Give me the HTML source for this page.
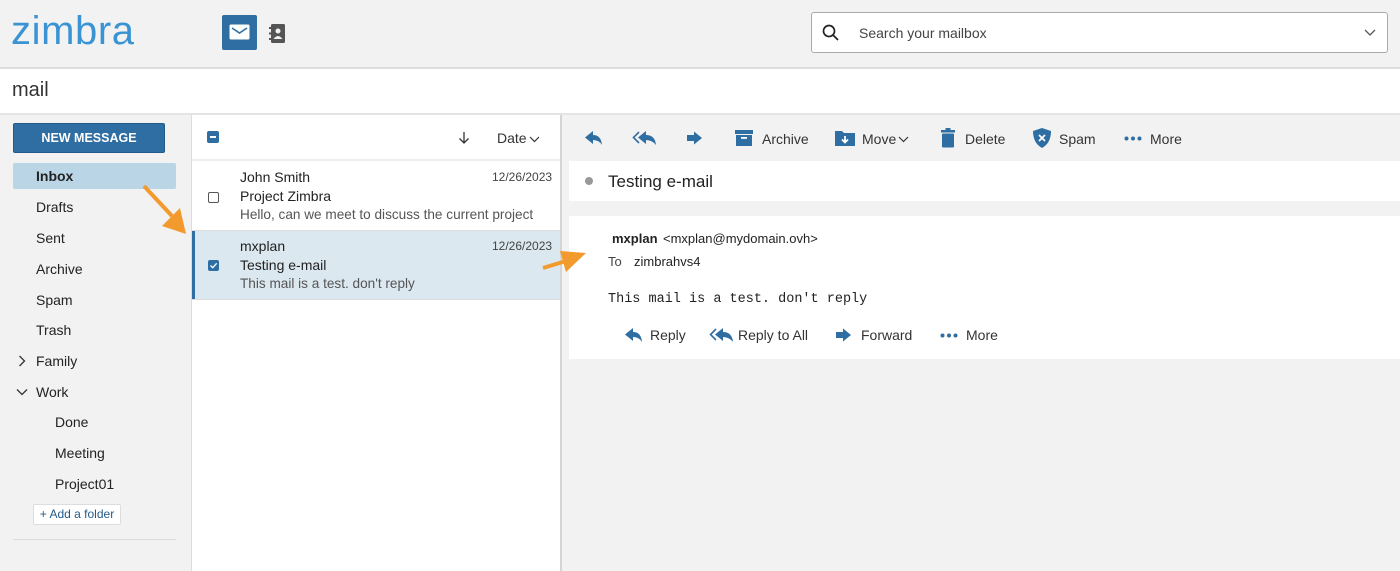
<!DOCTYPE html>
<html><head><meta charset="utf-8"><style>
*{margin:0;padding:0;box-sizing:border-box}
body{width:1400px;height:571px;overflow:hidden;position:relative;background:#f2f2f2;font-family:"Liberation Sans",sans-serif;color:#222}
.a{position:absolute}
.t{position:absolute;white-space:nowrap}
.blue{color:#2f6ea2}
</style></head><body>
<!-- header -->
<div class="a" style="left:0;top:0;width:1400px;height:67px;background:#f2f2f2"></div>
<div class="t" style="left:11px;top:9px;font-size:40px;color:#3a93d3;letter-spacing:0.6px;font-weight:normal">zimbra</div>
<div class="a" style="left:222px;top:15px;width:35px;height:35px;background:#2f6ea2;border-radius:2px"></div>
<svg class="a" style="left:229px;top:24px" width="21" height="16" viewBox="0 0 21 16"><rect x="0.5" y="0.5" width="20" height="15" rx="1.5" fill="#fff"/><path d="M3 4 L10.5 9 L18 4" stroke="#2f6ea2" stroke-width="1.6" fill="none"/></svg>
<svg class="a" style="left:269px;top:24px" width="17" height="19" viewBox="0 0 17 19"><rect x="2" y="0" width="14" height="19" rx="1.5" fill="#555"/><rect x="0" y="3" width="3" height="2" fill="#555"/><rect x="0" y="8.5" width="3" height="2" fill="#555"/><rect x="0" y="14" width="3" height="2" fill="#555"/><circle cx="9" cy="7" r="2.5" fill="#f2f2f2"/><path d="M4.5 15 Q9 9 13.5 15Z" fill="#f2f2f2"/></svg>
<div class="a" style="left:811px;top:12px;width:577px;height:41px;background:#fff;border:1px solid #aaa;border-radius:3px"></div>
<svg class="a" style="left:822px;top:24px" width="18" height="18" viewBox="0 0 18 18"><circle cx="7" cy="7" r="5.5" stroke="#222" stroke-width="1.7" fill="none"/><path d="M11 11 L16 16" stroke="#222" stroke-width="1.8"/></svg>
<div class="t" style="left:859px;top:25px;font-size:14px;color:#444">Search your mailbox</div>
<svg class="a" style="left:1364px;top:29px" width="12" height="8" viewBox="0 0 12 8"><path d="M1 1 L6 6 L11 1" stroke="#555" stroke-width="1.3" fill="none"/></svg>
<div class="a" style="left:0;top:67px;width:1400px;height:2px;background:#dcdcdc"></div>
<!-- mail bar -->
<div class="a" style="left:0;top:69px;width:1400px;height:44px;background:#fff"></div>
<div class="t" style="left:12px;top:79px;font-size:20px;color:#333">mail</div>
<div class="a" style="left:0;top:113px;width:1400px;height:2px;background:#e4e4e4"></div>
<!-- sidebar -->
<div class="a" style="left:191px;top:115px;width:1px;height:456px;background:#ddd"></div>
<div class="a" style="left:13px;top:123px;width:152px;height:30px;background:#2f6ea2;border:1px solid #245a88;border-radius:2px"></div>
<div class="t" style="left:13px;top:131px;width:152px;text-align:center;font-size:12.5px;font-weight:bold;color:#fff">NEW MESSAGE</div>
<div class="a" style="left:13px;top:163px;width:163px;height:26px;background:#bad6e6;border-radius:2px"></div>
<div class="t" style="left:36px;top:168px;font-size:14px;font-weight:bold">Inbox</div>
<div class="t" style="left:36px;top:199px;font-size:14px">Drafts</div>
<div class="t" style="left:36px;top:230px;font-size:14px">Sent</div>
<div class="t" style="left:36px;top:261px;font-size:14px">Archive</div>
<div class="t" style="left:36px;top:292px;font-size:14px">Spam</div>
<div class="t" style="left:36px;top:322px;font-size:14px">Trash</div>
<svg class="a" style="left:18px;top:355px" width="8" height="12" viewBox="0 0 8 12"><path d="M1.5 1 L6.5 6 L1.5 11" stroke="#333" stroke-width="1.3" fill="none"/></svg>
<div class="t" style="left:36px;top:353px;font-size:14px">Family</div>
<svg class="a" style="left:16px;top:388px" width="12" height="8" viewBox="0 0 12 8"><path d="M1 1.5 L6 6.5 L11 1.5" stroke="#333" stroke-width="1.3" fill="none"/></svg>
<div class="t" style="left:36px;top:384px;font-size:14px">Work</div>
<div class="t" style="left:55px;top:414px;font-size:14px">Done</div>
<div class="t" style="left:55px;top:445px;font-size:14px">Meeting</div>
<div class="t" style="left:55px;top:476px;font-size:14px">Project01</div>
<div class="a" style="left:33px;top:504px;width:88px;height:21px;background:#fff;border:1px solid #ddd;border-radius:2px"></div>
<div class="t blue" style="left:33px;top:507px;width:88px;text-align:center;font-size:12px;color:#245a88">+ Add a folder</div>
<div class="a" style="left:13px;top:539px;width:163px;height:1px;background:#ddd"></div>
<!-- list pane -->
<div class="a" style="left:192px;top:115px;width:368px;height:456px;background:#fff"></div>
<div class="a" style="left:207px;top:131px;width:12px;height:12px;background:#2f6ea2;border-radius:2px"></div>
<div class="a" style="left:210px;top:136px;width:6px;height:2px;background:#fff"></div>
<svg class="a" style="left:458px;top:131px" width="12" height="14" viewBox="0 0 12 14"><path d="M6 1 V12 M1.5 7.5 L6 12 L10.5 7.5" stroke="#333" stroke-width="1.3" fill="none"/></svg>
<div class="t" style="left:497px;top:130px;font-size:14px;color:#333">Date</div>
<svg class="a" style="left:529px;top:136px" width="11" height="7" viewBox="0 0 11 7"><path d="M1 1 L5.5 5.5 L10 1" stroke="#333" stroke-width="1.2" fill="none"/></svg>
<div class="a" style="left:192px;top:159px;width:368px;height:2px;background:#eee"></div>
<div class="t" style="left:240px;top:169px;font-size:14px">John Smith</div>
<div class="t" style="left:492px;top:170px;font-size:12px;color:#444">12/26/2023</div>
<div class="a" style="left:208px;top:192px;width:11px;height:11px;border:1.3px solid #555;border-radius:2px"></div>
<div class="t" style="left:240px;top:188px;font-size:14px">Project Zimbra</div>
<div class="t" style="left:240px;top:207px;font-size:13.6px;color:#555">Hello, can we meet to discuss the current project</div>
<div class="a" style="left:192px;top:230px;width:368px;height:1px;background:#ddd"></div>
<div class="a" style="left:192px;top:231px;width:368px;height:68px;background:#dbe8f0"></div>
<div class="a" style="left:192px;top:231px;width:3px;height:68px;background:#2f6ea2"></div>
<div class="t" style="left:240px;top:238px;font-size:14px">mxplan</div>
<div class="t" style="left:492px;top:239px;font-size:12px;color:#444">12/26/2023</div>
<div class="a" style="left:208px;top:260px;width:11px;height:11px;background:#2f6ea2;border-radius:2px"></div>
<svg class="a" style="left:208px;top:260px" width="11" height="11" viewBox="0 0 11 11"><path d="M2.5 5.5 L4.7 7.7 L8.7 3.3" stroke="#fff" stroke-width="1.3" fill="none"/></svg>
<div class="t" style="left:240px;top:257px;font-size:14px">Testing e-mail</div>
<div class="t" style="left:240px;top:276px;font-size:13.6px;color:#555">This mail is a test. don't reply</div>
<div class="a" style="left:192px;top:299px;width:368px;height:1px;background:#ddd"></div>
<div class="a" style="left:560px;top:115px;width:2px;height:456px;background:#d4d4d4"></div>
<!-- toolbar -->
<svg class="a" style="left:584px;top:130px" width="20" height="16" viewBox="0 0 20 16"><path d="M9 1 L1 7.5 L9 14 V10 Q15 10 18 15 Q17 5 9 5Z" fill="#2f6ea2"/></svg>
<svg class="a" style="left:632px;top:130px" width="26" height="16" viewBox="0 0 26 16"><path d="M7 2 L1.5 7.5 L7 13" stroke="#2f6ea2" stroke-width="1.6" fill="none"/><path d="M14 1 L6 7.5 L14 14 V10 Q20 10 24 15 Q23 5 14 5Z" fill="#2f6ea2"/></svg>
<svg class="a" style="left:686px;top:131px" width="17" height="14" viewBox="0 0 17 14"><path d="M1 4 H8 V0.5 L16 7 L8 13.5 V10 H1Z" fill="#2f6ea2"/></svg>
<svg class="a" style="left:735px;top:129px" width="18" height="18" viewBox="0 0 18 18"><rect x="0" y="1" width="18" height="4" fill="#2f6ea2"/><rect x="1" y="6" width="16" height="11" fill="#2f6ea2"/><rect x="6" y="8" width="6" height="1.8" fill="#fff"/></svg>
<div class="t" style="left:762px;top:131px;font-size:14px;color:#333">Archive</div>
<svg class="a" style="left:835px;top:129px" width="20" height="18" viewBox="0 0 20 18"><path d="M0 2 H7 L9 4 H20 V17 H0Z" fill="#2f6ea2"/><path d="M10 7 V13 M7 10.5 L10 13.5 L13 10.5" stroke="#fff" stroke-width="1.8" fill="none"/></svg>
<div class="t" style="left:862px;top:131px;font-size:14px;color:#333">Move</div>
<svg class="a" style="left:898px;top:136px" width="11" height="7" viewBox="0 0 11 7"><path d="M1 1 L5.5 5.5 L10 1" stroke="#333" stroke-width="1.2" fill="none"/></svg>
<svg class="a" style="left:941px;top:128px" width="14" height="20" viewBox="0 0 14 20"><rect x="0" y="2" width="14" height="2.5" fill="#2f6ea2"/><rect x="4.5" y="0" width="5" height="2" fill="#2f6ea2"/><rect x="1" y="5.5" width="12" height="14" rx="1" fill="#2f6ea2"/></svg>
<div class="t" style="left:965px;top:131px;font-size:14px;color:#333">Delete</div>
<svg class="a" style="left:1033px;top:128px" width="18" height="20" viewBox="0 0 18 20"><path d="M9 0 L18 3 Q18 15 9 20 Q0 15 0 3Z" fill="#2f6ea2"/><path d="M6 7 L12 13 M12 7 L6 13" stroke="#fff" stroke-width="1.7"/></svg>
<div class="t" style="left:1059px;top:131px;font-size:14px;color:#333">Spam</div>
<svg class="a" style="left:1124px;top:136px" width="18" height="5" viewBox="0 0 18 5"><circle cx="2.5" cy="2.5" r="2" fill="#2f6ea2"/><circle cx="9" cy="2.5" r="2" fill="#2f6ea2"/><circle cx="15.5" cy="2.5" r="2" fill="#2f6ea2"/></svg>
<div class="t" style="left:1150px;top:131px;font-size:14px;color:#333">More</div>
<!-- subject -->
<div class="a" style="left:569px;top:161px;width:831px;height:40px;background:#fff"></div>
<div class="a" style="left:585px;top:177px;width:8px;height:8px;border-radius:50%;background:#999"></div>
<div class="t" style="left:608px;top:172px;font-size:17px;color:#222">Testing e-mail</div>
<!-- message -->
<div class="a" style="left:569px;top:216px;width:831px;height:143px;background:#fff"></div>
<div class="t" style="left:612px;top:231px;font-size:13px;font-weight:bold">mxplan</div>
<div class="t" style="left:663px;top:231px;font-size:13px">&lt;mxplan@mydomain.ovh&gt;</div>
<div class="t" style="left:608px;top:254px;font-size:13px;color:#444">To</div>
<div class="t" style="left:634px;top:254px;font-size:13px">zimbrahvs4</div>
<div class="t" style="left:608px;top:292px;font-size:13.5px;font-family:'Liberation Mono',monospace">This mail is a test. don't reply</div>
<svg class="a" style="left:624px;top:327px" width="20" height="16" viewBox="0 0 20 16"><path d="M9 1 L1 7.5 L9 14 V10 Q15 10 18 15 Q17 5 9 5Z" fill="#2f6ea2"/></svg>
<div class="t" style="left:650px;top:327px;font-size:14px;color:#333">Reply</div>
<svg class="a" style="left:709px;top:327px" width="26" height="16" viewBox="0 0 26 16"><path d="M7 2 L1.5 7.5 L7 13" stroke="#2f6ea2" stroke-width="1.6" fill="none"/><path d="M14 1 L6 7.5 L14 14 V10 Q20 10 24 15 Q23 5 14 5Z" fill="#2f6ea2"/></svg>
<div class="t" style="left:738px;top:327px;font-size:14px;color:#333">Reply to All</div>
<svg class="a" style="left:835px;top:328px" width="17" height="14" viewBox="0 0 17 14"><path d="M1 4 H8 V0.5 L16 7 L8 13.5 V10 H1Z" fill="#2f6ea2"/></svg>
<div class="t" style="left:861px;top:327px;font-size:14px;color:#333">Forward</div>
<svg class="a" style="left:940px;top:333px" width="18" height="5" viewBox="0 0 18 5"><circle cx="2.5" cy="2.5" r="2" fill="#2f6ea2"/><circle cx="9" cy="2.5" r="2" fill="#2f6ea2"/><circle cx="15.5" cy="2.5" r="2" fill="#2f6ea2"/></svg>
<div class="t" style="left:966px;top:327px;font-size:14px;color:#333">More</div>
<!-- arrows -->
<svg class="a" style="left:0;top:0" width="1400" height="571" viewBox="0 0 1400 571">
<path d="M144 186 L172 216" stroke="#f29a2e" stroke-width="4"/>
<path d="M162 226 L186 234 L180 208Z" fill="#f29a2e"/>
<path d="M543 268 L566 261" stroke="#f29a2e" stroke-width="4"/>
<path d="M560 251 L586 253 L566 272Z" fill="#f29a2e"/>
</svg>
</body></html>
